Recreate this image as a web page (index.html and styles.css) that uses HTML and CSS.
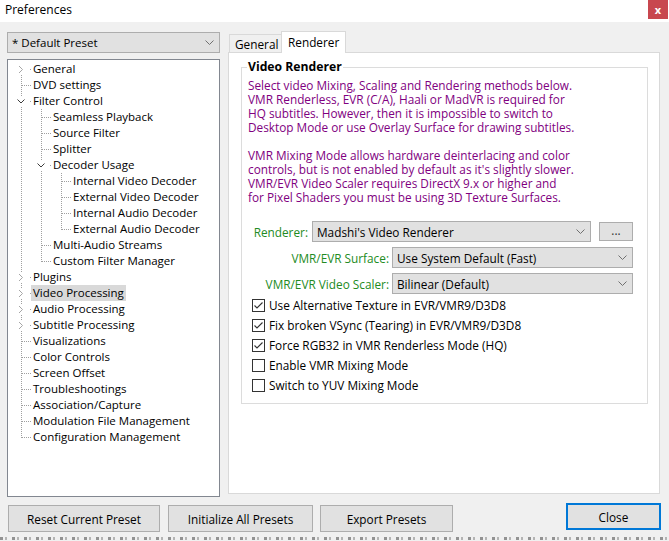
FILE: index.html
```html
<!DOCTYPE html>
<html>
<head>
<meta charset="utf-8">
<link rel="stylesheet" href="styles.css">
</head>
<body>
<div class="titlebar">
  <span class="title">Preferences</span>
  <div class="close">x</div>
</div>
<div class="main">
  <div class="left">
    <div class="combo preset"><span>* Default Preset</span><svg class="chev" width="9" height="5" viewBox="0 0 9 5"><polyline points="0.5,0.5 4.5,4.5 8.5,0.5" fill="none" stroke="#707070" stroke-width="1"/></svg></div>
    <div class="tree">
      <div class="row"><span class="cell c-exp first"><svg width="9" height="9" viewBox="0 0 9 9"><rect width="9" height="9" fill="#fff"/><polyline points="2,1 5.5,4.5 2,8" fill="none" stroke="#a6a6a6"/></svg></span><span class="lab">General</span></div>
      <div class="row"><span class="cell c-tee"></span><span class="lab">DVD settings</span></div>
      <div class="row"><span class="cell c-exp"><svg width="9" height="9" viewBox="0 0 9 9"><rect width="9" height="9" fill="#fff"/><polyline points="0.5,2.5 4,6 7.5,2.5" fill="none" stroke="#3c3c3c"/></svg></span><span class="lab">Filter Control</span></div>
      <div class="row"><span class="cell c-v"></span><span class="cell c-tee"></span><span class="lab">Seamless Playback</span></div>
      <div class="row"><span class="cell c-v"></span><span class="cell c-tee"></span><span class="lab">Source Filter</span></div>
      <div class="row"><span class="cell c-v"></span><span class="cell c-tee"></span><span class="lab">Splitter</span></div>
      <div class="row"><span class="cell c-v"></span><span class="cell c-exp"><svg width="9" height="9" viewBox="0 0 9 9"><rect width="9" height="9" fill="#fff"/><polyline points="0.5,2.5 4,6 7.5,2.5" fill="none" stroke="#3c3c3c"/></svg></span><span class="lab">Decoder Usage</span></div>
      <div class="row"><span class="cell c-v"></span><span class="cell c-v"></span><span class="cell c-tee"></span><span class="lab">Internal Video Decoder</span></div>
      <div class="row"><span class="cell c-v"></span><span class="cell c-v"></span><span class="cell c-tee"></span><span class="lab">External Video Decoder</span></div>
      <div class="row"><span class="cell c-v"></span><span class="cell c-v"></span><span class="cell c-tee"></span><span class="lab">Internal Audio Decoder</span></div>
      <div class="row"><span class="cell c-v"></span><span class="cell c-v"></span><span class="cell c-end"></span><span class="lab">External Audio Decoder</span></div>
      <div class="row"><span class="cell c-v"></span><span class="cell c-tee"></span><span class="lab">Multi-Audio Streams</span></div>
      <div class="row"><span class="cell c-v"></span><span class="cell c-end"></span><span class="lab">Custom Filter Manager</span></div>
      <div class="row"><span class="cell c-exp"><svg width="9" height="9" viewBox="0 0 9 9"><rect width="9" height="9" fill="#fff"/><polyline points="2,1 5.5,4.5 2,8" fill="none" stroke="#a6a6a6"/></svg></span><span class="lab">Plugins</span></div>
      <div class="row"><span class="cell c-exp"><svg width="9" height="9" viewBox="0 0 9 9"><rect width="9" height="9" fill="#fff"/><polyline points="2,1 5.5,4.5 2,8" fill="none" stroke="#a6a6a6"/></svg></span><span class="lab selected">Video Processing</span></div>
      <div class="row"><span class="cell c-exp"><svg width="9" height="9" viewBox="0 0 9 9"><rect width="9" height="9" fill="#fff"/><polyline points="2,1 5.5,4.5 2,8" fill="none" stroke="#a6a6a6"/></svg></span><span class="lab">Audio Processing</span></div>
      <div class="row"><span class="cell c-exp"><svg width="9" height="9" viewBox="0 0 9 9"><rect width="9" height="9" fill="#fff"/><polyline points="2,1 5.5,4.5 2,8" fill="none" stroke="#a6a6a6"/></svg></span><span class="lab">Subtitle Processing</span></div>
      <div class="row"><span class="cell c-tee"></span><span class="lab">Visualizations</span></div>
      <div class="row"><span class="cell c-tee"></span><span class="lab">Color Controls</span></div>
      <div class="row"><span class="cell c-tee"></span><span class="lab">Screen Offset</span></div>
      <div class="row"><span class="cell c-tee"></span><span class="lab">Troubleshootings</span></div>
      <div class="row"><span class="cell c-tee"></span><span class="lab">Association/Capture</span></div>
      <div class="row"><span class="cell c-tee"></span><span class="lab">Modulation File Management</span></div>
      <div class="row"><span class="cell c-end"></span><span class="lab">Configuration Management</span></div>
    </div>
  </div>
  <div class="right">
    <div class="tabs">
      <div class="tab tab-general">General</div>
      <div class="tab tab-active">Renderer</div>
    </div>
    <div class="panel">
      <fieldset class="group">
        <legend>Video Renderer</legend>
        <p class="info first-info">Select video Mixing, Scaling and Rendering methods below.<br>VMR Renderless, EVR (C/A), Haali or MadVR is required for<br>HQ subtitles. However, then it is impossible to switch to<br>Desktop Mode or use Overlay Surface for drawing subtitles.</p>
        <p class="info second-info">VMR Mixing Mode allows hardware deinterlacing and color<br>controls, but is not enabled by default as it's slightly slower.<br>VMR/EVR Video Scaler requires DirectX 9.x or higher and<br>for Pixel Shaders you must be using 3D Texture Surfaces.</p>
        <div class="frow frow-first">
          <span class="lbl lbl-short">Renderer:</span>
          <div class="combo sel-renderer"><span>Madshi's Video Renderer</span><svg class="chev" width="9" height="5" viewBox="0 0 9 5"><polyline points="0.5,0.5 4.5,4.5 8.5,0.5" fill="none" stroke="#707070" stroke-width="1"/></svg></div>
          <div class="dots">...</div>
        </div>
        <div class="frow">
          <span class="lbl lbl-long">VMR/EVR Surface:</span>
          <div class="combo sel-wide"><span>Use System Default (Fast)</span><svg class="chev" width="9" height="5" viewBox="0 0 9 5"><polyline points="0.5,0.5 4.5,4.5 8.5,0.5" fill="none" stroke="#707070" stroke-width="1"/></svg></div>
        </div>
        <div class="frow">
          <span class="lbl lbl-long">VMR/EVR Video Scaler:</span>
          <div class="combo sel-wide"><span>Bilinear (Default)</span><svg class="chev" width="9" height="5" viewBox="0 0 9 5"><polyline points="0.5,0.5 4.5,4.5 8.5,0.5" fill="none" stroke="#707070" stroke-width="1"/></svg></div>
        </div>
        <div class="checks">
          <div class="check"><span class="box"><svg width="11" height="11" viewBox="0 0 11 11"><polyline points="1.5,5.5 4,8 9.5,2.5" fill="none" stroke="#333" stroke-width="1.1"/></svg></span><span>Use Alternative Texture in EVR/VMR9/D3D8</span></div>
          <div class="check"><span class="box"><svg width="11" height="11" viewBox="0 0 11 11"><polyline points="1.5,5.5 4,8 9.5,2.5" fill="none" stroke="#333" stroke-width="1.1"/></svg></span><span>Fix broken VSync (Tearing) in EVR/VMR9/D3D8</span></div>
          <div class="check"><span class="box"><svg width="11" height="11" viewBox="0 0 11 11"><polyline points="1.5,5.5 4,8 9.5,2.5" fill="none" stroke="#333" stroke-width="1.1"/></svg></span><span>Force RGB32 in VMR Renderless Mode (HQ)</span></div>
          <div class="check"><span class="box"></span><span>Enable VMR Mixing Mode</span></div>
          <div class="check"><span class="box"></span><span>Switch to YUV Mixing Mode</span></div>
        </div>
      </fieldset>
    </div>
  </div>
</div>
<div class="buttons">
  <div class="btn btn-reset">Reset Current Preset</div>
  <div class="btn btn-init">Initialize All Presets</div>
  <div class="btn btn-export">Export Presets</div>
  <div class="btn btn-close">Close</div>
</div>
<div class="strip"></div>
</body>
</html>
```

FILE: styles.css
```css
html, body {
  margin: 0;
  padding: 0;
}
body {
  width: 669px;
  height: 541px;
  overflow: hidden;
  background: #f0f0f0;
  font-family: "Open Sans", "Noto Sans", sans-serif;
  font-size: 11.5px;
  color: #000;
}
.titlebar {
  height: 22px;
  background: #fff;
  display: flex;
  justify-content: space-between;
  align-items: flex-start;
}
.title {
  padding-left: 5px;
  line-height: 20px;
  font-size: 12px;
}
.close {
  width: 20px;
  height: 19px;
  margin-right: 1px;
  background: #c8474f;
  color: #fff;
  font-size: 11px;
  font-weight: bold;
  display: flex;
  align-items: center;
  justify-content: center;
  line-height: 1;
}
.main {
  display: flex;
  gap: 8px;
  padding: 9px 0 0 7px;
}
.left {
  width: 213px;
  margin-top: 1px;
}
.combo {
  height: 21px;
  box-sizing: border-box;
  border: 1px solid #adadad;
  background: #e1e1e1;
  display: flex;
  align-items: center;
  justify-content: space-between;
  padding: 0 5px 0 4px;
  white-space: nowrap;
}
.chev {
  flex: none;
}
.tree {
  margin-top: 6px;
  height: 438px;
  box-sizing: border-box;
  border: 1px solid #828790;
  background: #fff;
  padding-top: 1px;
}
.row {
  display: flex;
  height: 16px;
  align-items: center;
  padding-left: 3px;
  white-space: nowrap;
}
.cell {
  width: 20px;
  height: 16px;
  flex: none;
  background-repeat: no-repeat;
}
.c-v {
  background-image: repeating-linear-gradient(to bottom, #a0a0a0 0 1px, transparent 1px 2px);
  background-size: 1px 16px;
  background-position: 10px 0;
}
.c-tee {
  background-image: repeating-linear-gradient(to bottom, #a0a0a0 0 1px, transparent 1px 2px), repeating-linear-gradient(to right, #a0a0a0 0 1px, transparent 1px 2px);
  background-size: 1px 16px, 9px 1px;
  background-position: 10px 0, 11px 8px;
}
.c-end {
  background-image: repeating-linear-gradient(to bottom, #a0a0a0 0 1px, transparent 1px 2px), repeating-linear-gradient(to right, #a0a0a0 0 1px, transparent 1px 2px);
  background-size: 1px 9px, 9px 1px;
  background-position: 10px 0, 11px 8px;
}
.c-exp {
  display: flex;
  align-items: center;
  padding-left: 6px;
  box-sizing: border-box;
  background-image: repeating-linear-gradient(to bottom, #a0a0a0 0 1px, transparent 1px 2px), linear-gradient(#a0a0a0, #a0a0a0);
  background-size: 1px 16px, 1px 1px;
  background-position: 10px 0, 19px 8px;
}
.c-exp.first {
  background-size: 1px 8px, 1px 1px;
  background-position: 10px 8px, 19px 8px;
}
.c-exp svg {
  display: block;
}
.lab {
  padding: 0 2px;
  line-height: 16px;
}
.lab.selected {
  background: #d9d9d9;
}
.right {
  width: 432px;
  display: flex;
  flex-direction: column;
}
.tabs {
  display: flex;
  height: 21px;
  align-items: flex-end;
  padding-left: 1px;
}
.tab {
  box-sizing: border-box;
  border: 1px solid #d9d9d9;
  border-bottom: none;
  white-space: nowrap;
  font-size: 11.8px;
}
.tab-general {
  width: 52px;
  height: 18px;
  background: #f0f0f0;
  padding-left: 5px;
  line-height: 18px;
  border-right: none;
}
.tab-active {
  width: 65px;
  height: 22px;
  margin-bottom: -1px;
  background: #fff;
  padding-left: 6px;
  line-height: 20px;
  position: relative;
  z-index: 1;
}
.panel {
  height: 442px;
  box-sizing: border-box;
  border: 1px solid #d9d9d9;
  background: #fff;
  font-size: 11.8px;
}
.group {
  width: 407px;
  box-sizing: border-box;
  margin: 6px 0 0 12px;
  border: 1px solid #dcdcdc;
  padding: 0 6px 8px 6px;
  min-width: 0;
}
.group legend {
  padding: 0 1px;
  margin-left: -1px;
  font-weight: bold;
  font-size: 12.2px;
  line-height: 16px;
}
.info {
  margin: 0;
  color: #800080;
  line-height: 14px;
  white-space: nowrap;
}
.first-info {
  padding-top: 3px;
}
.second-info {
  margin-top: 14px;
}
.frow {
  display: flex;
  align-items: center;
  height: 21px;
  margin-top: 5px;
}
.frow-first {
  margin-top: 17px;
}
.lbl {
  color: #228b22;
  text-align: right;
  box-sizing: border-box;
  flex: none;
  white-space: nowrap;
}
.lbl-short {
  width: 64px;
  padding-right: 4px;
}
.lbl-long {
  width: 144px;
  padding-right: 3px;
}
.sel-renderer {
  width: 279px;
}
.sel-wide {
  width: 241px;
}
.dots {
  margin-left: 8px;
  width: 34px;
  height: 19px;
  box-sizing: border-box;
  border: 1px solid #adadad;
  background: #e1e1e1;
  text-align: center;
  line-height: 15px;
  color: #333;
}
.checks {
  margin-top: 1px;
}
.check {
  display: flex;
  align-items: center;
  height: 20px;
  padding-left: 4px;
  white-space: nowrap;
}
.box {
  width: 13px;
  height: 13px;
  box-sizing: border-box;
  border: 1px solid #333;
  background: #fff;
  margin-right: 4px;
  flex: none;
}
.box svg {
  display: block;
}
.buttons {
  display: flex;
  align-items: flex-start;
  padding: 8px 8px 0 8px;
  font-size: 11.8px;
}
.btn {
  height: 27px;
  box-sizing: border-box;
  border: 1px solid #adadad;
  background: #e1e1e1;
  display: flex;
  align-items: center;
  justify-content: center;
  white-space: nowrap;
}
.btn-reset {
  width: 152px;
}
.btn-init {
  width: 145px;
  margin-left: 8px;
}
.btn-export {
  width: 133px;
  margin-left: 7px;
}
.btn-close {
  width: 95px;
  margin-left: auto;
  margin-top: -2px;
  border: 2px solid #0078d7;
}
.strip {
  margin-top: 5px;
  height: 3px;
  background-image: repeating-linear-gradient(to right, #6a6a6a 0 3px, transparent 3px 5px, #9a9a9a 5px 7px, transparent 7px 12px);
  opacity: 0.7;
}
```
